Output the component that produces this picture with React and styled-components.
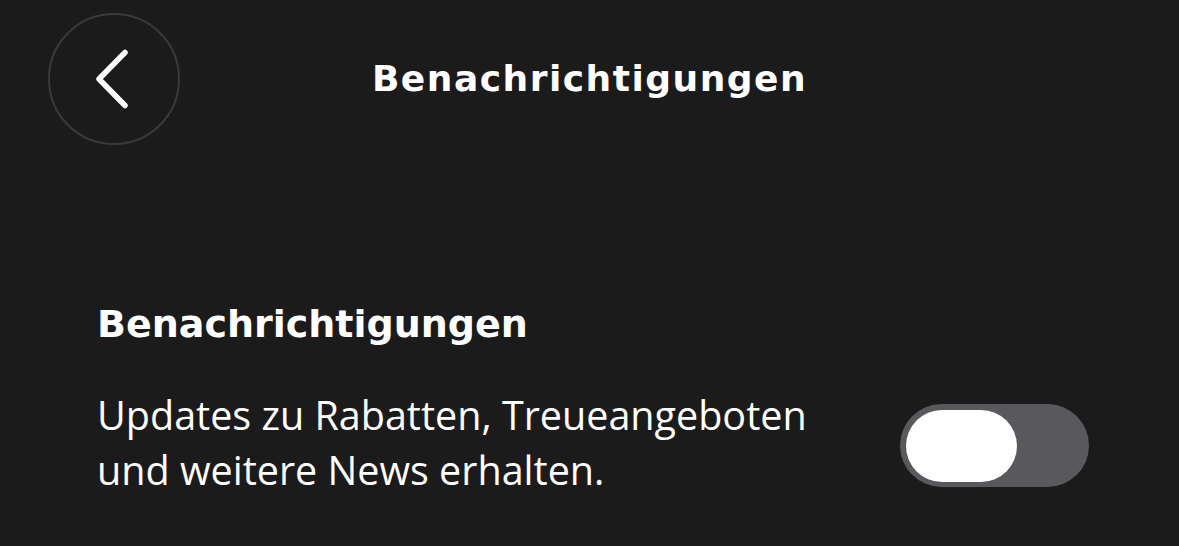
import React, { useState } from "react";
import styled, { createGlobalStyle } from "styled-components";

const GlobalStyle = createGlobalStyle`
  html, body {
    margin: 0;
    padding: 0;
    background: #1b1b1b;
  }
  body {
    font-family: "Open Sans", "Noto Sans", sans-serif;
    color: #ffffff;
  }
`;

const Page = styled.div`
  width: 1179px;
  height: 546px;
  background: #1b1b1b;
  overflow: hidden;
`;

const Header = styled.header`
  position: relative;
  height: 158px;
  display: flex;
  align-items: flex-start;
  justify-content: center;
`;

const BackButton = styled.button`
  position: absolute;
  left: 48px;
  top: 13px;
  width: 132px;
  height: 132px;
  border-radius: 50%;
  border: 2px solid #3a3a3a;
  background: #1b1b1b;
  box-shadow: 0 0 18px rgba(255, 255, 255, 0.025);
  display: flex;
  align-items: center;
  justify-content: center;
  padding: 0;
  cursor: pointer;
`;

const Title = styled.h1`
  margin: 54px 0 0;
  font-family: "DejaVu Sans", "Open Sans", sans-serif;
  font-size: 36px;
  font-weight: 700;
  line-height: 50px;
  letter-spacing: 1.5px;
`;

const Content = styled.section`
  padding: 144px 90px 0 97px;
`;

const SectionTitle = styled.h2`
  margin: 0;
  font-family: "DejaVu Sans", "Open Sans", sans-serif;
  font-size: 38px;
  font-weight: 700;
  line-height: 44px;
`;

const Row = styled.div`
  margin-top: 42px;
  display: flex;
  align-items: flex-start;
  justify-content: space-between;
`;

const Description = styled.p`
  margin: 0;
  font-size: 39.5px;
  font-weight: 400;
  line-height: 55px;
  max-width: 760px;
`;

const Track = styled.button`
  margin-top: 16px;
  width: 189px;
  height: 83px;
  border-radius: 42px;
  border: none;
  padding: 6px;
  background: ${(p) => (p.$on ? "#34c759" : "#59595d")};
  display: flex;
  justify-content: ${(p) => (p.$on ? "flex-end" : "flex-start")};
  align-items: center;
  cursor: pointer;
  flex-shrink: 0;
`;

const Thumb = styled.span`
  width: 111px;
  height: 72px;
  border-radius: 36px;
  background: #ffffff;
`;

const ChevronLeft = () => (
  <svg width="40" height="60" viewBox="0 0 40 60" fill="none">
    <path
      d="M31 3.5 L5 30 L31 56.5"
      stroke="#ffffff"
      strokeWidth="5.5"
      strokeLinecap="round"
      strokeLinejoin="round"
    />
  </svg>
);

export default function App() {
  const [on, setOn] = useState(false);

  return (
    <Page>
      <GlobalStyle />
      <Header>
        <BackButton aria-label="Zurück">
          <ChevronLeft />
        </BackButton>
        <Title>Benachrichtigungen</Title>
      </Header>
      <Content>
        <SectionTitle>Benachrichtigungen</SectionTitle>
        <Row>
          <Description>
            Updates zu Rabatten, Treueangeboten
            <br />
            und weitere News erhalten.
          </Description>
          <Track $on={on} onClick={() => setOn(!on)} aria-pressed={on}>
            <Thumb />
          </Track>
        </Row>
      </Content>
    </Page>
  );
}
